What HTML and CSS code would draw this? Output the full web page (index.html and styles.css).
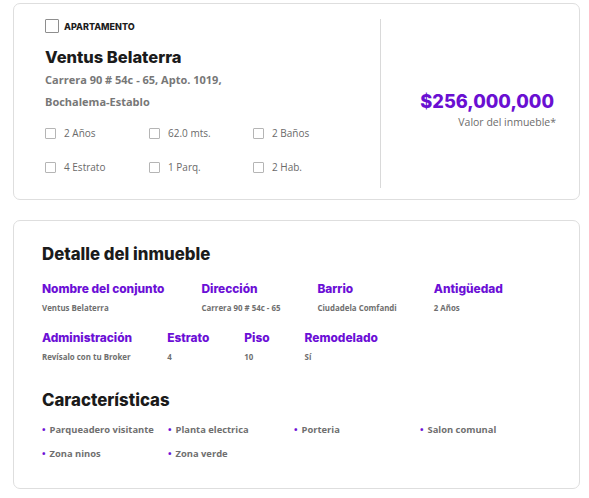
FILE: index.html
```html
<!DOCTYPE html>
<html lang="es">
<head>
<meta charset="utf-8">
<title>Ventus Belaterra</title>
<link rel="stylesheet" href="styles.css">
</head>
<body>
<div class="page">
  <section class="card summary">
    <div class="summary-main">
      <div class="type-row">
        <span class="box box-lg"></span>
        <span class="type">APARTAMENTO</span>
      </div>
      <h1 class="name">Ventus Belaterra</h1>
      <p class="address">Carrera 90 # 54c - 65, Apto. 1019,</p>
      <p class="address">Bochalema-Establo</p>
      <div class="features">
        <div class="feat"><span class="box"></span><span>2 Años</span></div>
        <div class="feat"><span class="box"></span><span>62.0 mts.</span></div>
        <div class="feat"><span class="box"></span><span>2 Baños</span></div>
        <div class="feat"><span class="box"></span><span>4 Estrato</span></div>
        <div class="feat"><span class="box"></span><span>1 Parq.</span></div>
        <div class="feat"><span class="box"></span><span>2 Hab.</span></div>
      </div>
    </div>
    <div class="divider"></div>
    <div class="price-col">
      <div class="price">$256,000,000</div>
      <div class="price-note">Valor del inmueble*</div>
    </div>
  </section>

  <section class="card detail">
    <h2 class="title">Detalle del inmueble</h2>
    <div class="info-row">
      <div class="info"><div class="label">Nombre del conjunto</div><div class="value">Ventus Belaterra</div></div>
      <div class="info"><div class="label">Dirección</div><div class="value">Carrera 90 # 54c - 65</div></div>
      <div class="info"><div class="label">Barrio</div><div class="value">Ciudadela Comfandi</div></div>
      <div class="info"><div class="label">Antigüedad</div><div class="value">2 Años</div></div>
    </div>
    <div class="info-row row-2">
      <div class="info"><div class="label">Administración</div><div class="value">Revísalo con tu Broker</div></div>
      <div class="info"><div class="label">Estrato</div><div class="value">4</div></div>
      <div class="info"><div class="label">Piso</div><div class="value">10</div></div>
      <div class="info"><div class="label">Remodelado</div><div class="value">Sí</div></div>
    </div>
    <h2 class="title title-2">Características</h2>
    <ul class="chars">
      <li>Parqueadero visitante</li>
      <li>Planta electrica</li>
      <li>Porteria</li>
      <li>Salon comunal</li>
      <li>Zona ninos</li>
      <li>Zona verde</li>
    </ul>
  </section>
</div>
</body>
</html>
```

FILE: styles.css
```css
* { box-sizing: border-box; }

body {
  margin: 0;
  background: #ffffff;
  font-family: "Open Sans", "Liberation Sans", sans-serif;
  color: #6f6f6f;
}

.page {
  padding: 3px 9px 0 13px;
  display: flex;
  flex-direction: column;
  gap: 20px;
}

.card {
  border: 1.5px solid #dedede;
  border-radius: 7px;
  background: #fff;
}

/* ---------- summary card ---------- */
.summary {
  height: 197px;
  display: flex;
  align-items: stretch;
}

.summary-main {
  width: 366px;
  padding: 15px 0 0 31px;
}

.type-row {
  display: flex;
  align-items: center;
  gap: 5px;
  height: 14px;
}

.box {
  display: inline-block;
  width: 11px;
  height: 11px;
  border: 1px solid #b5b5b5;
  border-radius: 1px;
  flex: none;
}

.box-lg {
  width: 14px;
  height: 14px;
  border-color: #8e8e8e;
}

.type {
  font-family: "Inter", sans-serif;
  font-weight: 800;
  font-size: 9px;
  color: #1d1d1d;
}

.name {
  margin: 13px 0 0 0;
  font-family: "Inter", sans-serif;
  font-weight: 800;
  font-size: 16.5px;
  line-height: 22px;
  color: #1b1b1b;
}

.address {
  margin: 0;
  font-size: 11px;
  font-weight: 700;
  line-height: 22px;
  color: #777777;
}

.address:first-of-type { margin-top: 1px; }

.features {
  margin-top: 11px;
  display: grid;
  grid-template-columns: repeat(3, 104px);
  row-gap: 16px;
}

.feat {
  display: flex;
  align-items: center;
  gap: 8px;
  height: 18px;
  font-size: 10px;
  color: #6a6a6a;
}

.divider {
  width: 1px;
  background: #d9d9d9;
  margin: 15px 0 11px 0;
}

.price-col {
  flex: 1;
  display: flex;
  flex-direction: column;
  align-items: flex-end;
  justify-content: center;
  padding: 18px 25px 0 0;
}

.price {
  font-family: "Inter", sans-serif;
  font-weight: 800;
  font-size: 18.2px;
  line-height: 22px;
  color: #6a0fd2;
}

.price-note {
  font-size: 10.5px;
  line-height: 20px;
  color: #6d6d6d;
  margin-right: -2px;
}

/* ---------- detail card ---------- */
.detail {
  height: 269px;
  padding: 20px 20px 0 28px;
}

.title {
  margin: 0;
  font-family: "Inter", sans-serif;
  font-weight: 800;
  font-size: 16.8px;
  line-height: 26px;
  color: #1b1b1b;
}

.info-row {
  display: flex;
  gap: 37px;
  margin-top: 13px;
}

.info-row.row-2 {
  margin-top: 12px;
  gap: 35px;
}

.label {
  font-family: "Inter", sans-serif;
  font-weight: 800;
  font-size: 11.9px;
  line-height: 18px;
  color: #6c0fd6;
}

.value {
  margin-top: 1px;
  font-size: 7.9px;
  font-weight: 700;
  line-height: 18px;
  color: #6f6f6f;
}

.title-2 { margin-top: 21px; }

.chars {
  list-style: none;
  margin: 8px 0 0 0;
  padding: 0;
  display: grid;
  grid-template-columns: repeat(4, 126px);
  row-gap: 6px;
}

.chars li {
  font-size: 9.4px;
  font-weight: 700;
  line-height: 18px;
  color: #6f6f6f;
}

.chars li::before {
  content: "•";
  color: #6c0fd6;
  margin-right: 4px;
}
```
